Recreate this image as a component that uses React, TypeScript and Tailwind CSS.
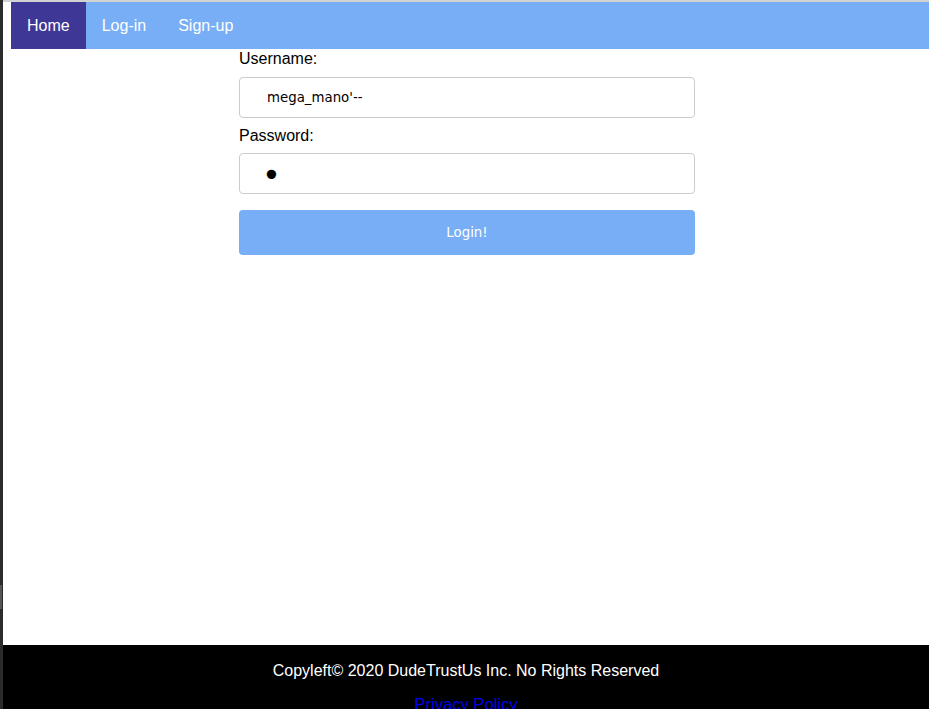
import React from 'react';

const tabs = ['Home', 'Log-in', 'Sign-up'];

const LoginPage = () => {
  return (
    <div className="flex h-[709px] overflow-hidden bg-white font-['Liberation_Sans',Arial,sans-serif]">
      {/* dark window edge */}
      <div className="w-[3px] shrink-0 bg-[#2b2b2b] flex flex-col pt-[585px]">
        <div className="w-[2px] h-[24px] bg-[#555]" />
      </div>

      <div className="flex-1 flex flex-col border-t-2 border-[#d2d2d2]">
        {/* nav */}
        <nav className="ml-[8px] h-[47px] shrink-0 flex bg-[#78aef5] text-white text-[16px] leading-[18px]">
          {tabs.map((tab, index) => (
            <a
              key={tab}
              className={`flex items-center px-[16px] ${index === 0 ? 'bg-[#3f3795]' : ''}`}
            >
              {tab}
            </a>
          ))}
        </nav>

        {/* form */}
        <div className="h-[596px] shrink-0">
          <form className="ml-[236px] w-[456px] pt-[1px] text-[16px] leading-[18px] text-black">
            <label className="block mb-[9px]">Username:</label>
            <input
              type="text"
              readOnly
              defaultValue="mega_mano'--"
              className="block w-full h-[41px] pl-[27px] border border-[#cccccc] rounded-[4px] text-[13.33px] font-['DejaVu_Sans',sans-serif] text-black outline-none"
            />
            <label className="block mt-[9px] mb-[8px]">Password:</label>
            <input
              type="password"
              readOnly
              defaultValue="a"
              className="block w-full h-[41px] pl-[22px] pt-[2px] border border-[#cccccc] rounded-[4px] text-[32px] leading-[37px] font-['DejaVu_Sans',sans-serif] text-black outline-none"
            />
            <button
              type="button"
              className="mt-[16px] w-full h-[45px] bg-[#78aef5] rounded-[4px] text-white text-[13.33px] font-['DejaVu_Sans',sans-serif]"
            >
              Login!
            </button>
          </form>
        </div>

        {/* footer */}
        <footer className="shrink-0 bg-black text-center text-[16px] leading-[18px] pt-[17px] pb-[16px]">
          <p className="text-white mb-[16px]">Copyleft© 2020 DudeTrustUs Inc. No Rights Reserved</p>
          <a className="text-[#0000ee] text-[16.6px] underline">Privacy Policy</a>
        </footer>
      </div>
    </div>
  );
};

export default LoginPage;
